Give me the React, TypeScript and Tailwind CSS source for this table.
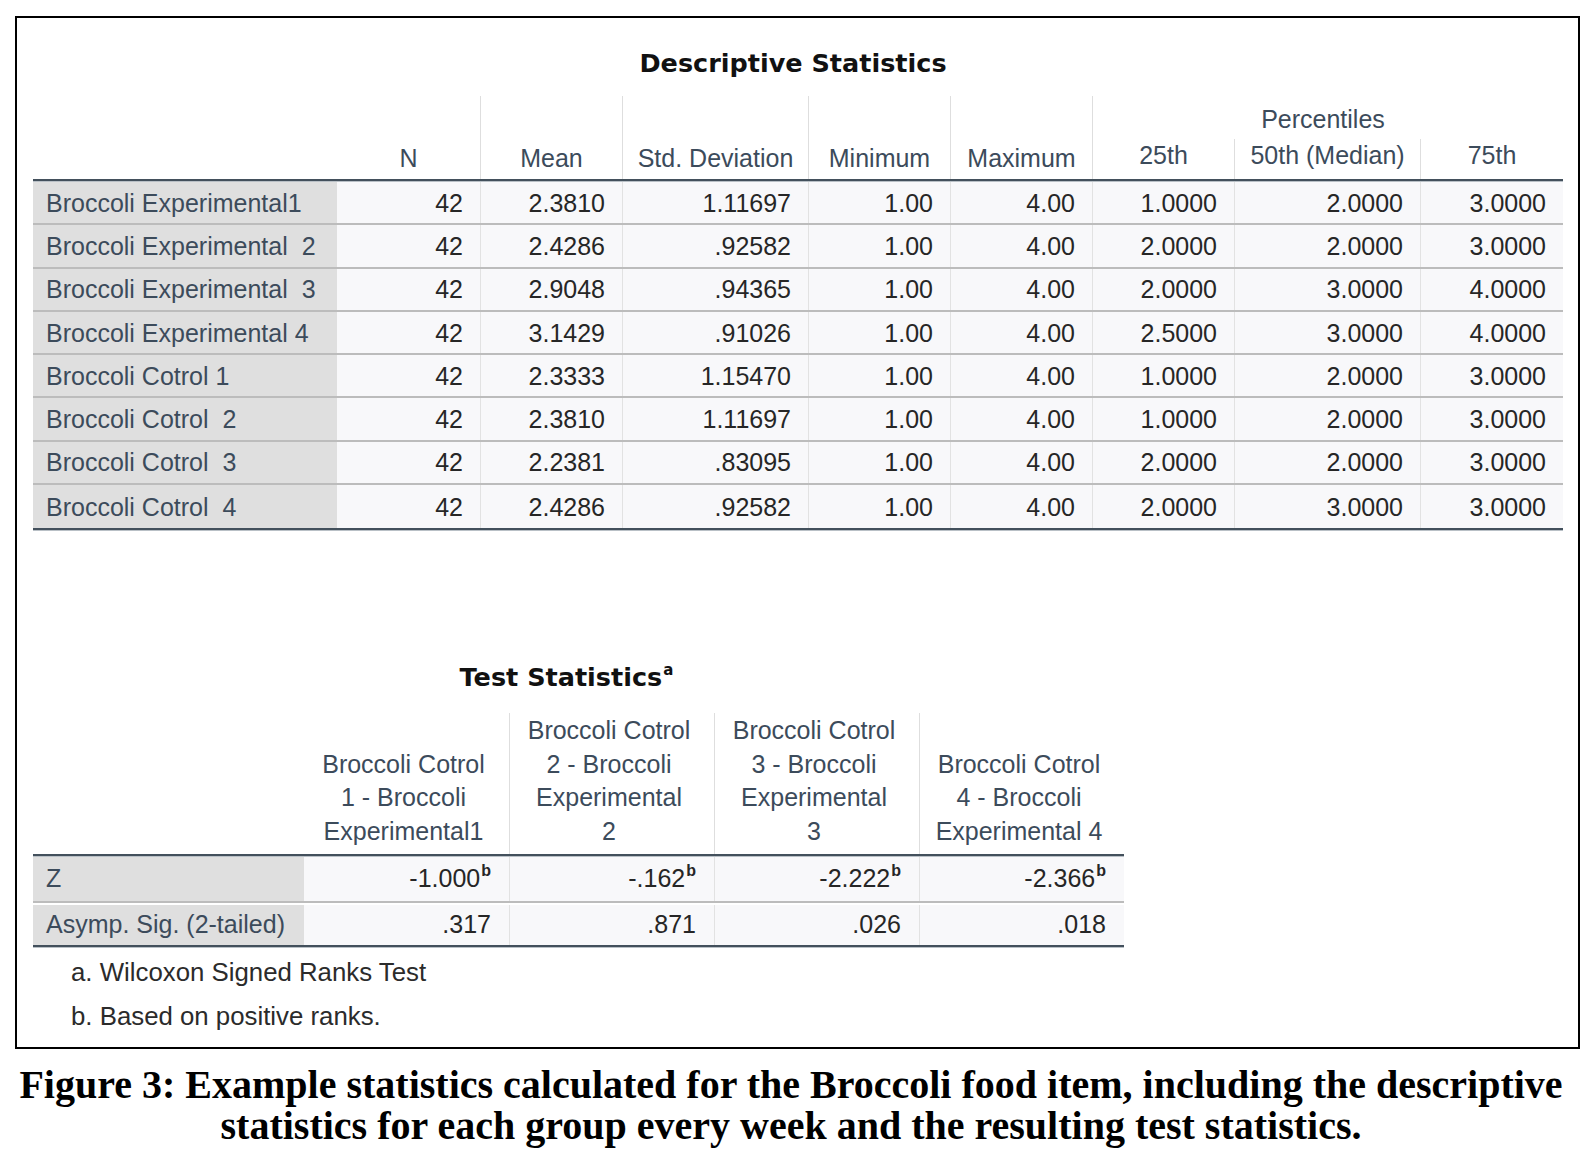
import React from "react";

const rows: string[][] = [
  ["Broccoli Experimental1", "42", "2.3810", "1.11697", "1.00", "4.00", "1.0000", "2.0000", "3.0000"],
  ["Broccoli Experimental  2", "42", "2.4286", ".92582", "1.00", "4.00", "2.0000", "2.0000", "3.0000"],
  ["Broccoli Experimental  3", "42", "2.9048", ".94365", "1.00", "4.00", "2.0000", "3.0000", "4.0000"],
  ["Broccoli Experimental 4", "42", "3.1429", ".91026", "1.00", "4.00", "2.5000", "3.0000", "4.0000"],
  ["Broccoli Cotrol 1", "42", "2.3333", "1.15470", "1.00", "4.00", "1.0000", "2.0000", "3.0000"],
  ["Broccoli Cotrol  2", "42", "2.3810", "1.11697", "1.00", "4.00", "1.0000", "2.0000", "3.0000"],
  ["Broccoli Cotrol  3", "42", "2.2381", ".83095", "1.00", "4.00", "2.0000", "2.0000", "3.0000"],
  ["Broccoli Cotrol  4", "42", "2.4286", ".92582", "1.00", "4.00", "2.0000", "3.0000", "3.0000"],
];

const DCOLS = "grid grid-cols-[304px_143px_142px_186px_142px_142px_142px_186px_143px]";
const TCOLS = "grid grid-cols-[271px_205px_205px_205px_205px]";

function ThickLine({ w }: { w: string }) {
  return (
    <div className={w}>
      <div className="h-[2px] bg-[#43505c]" />
      <div className="h-px bg-[#b9c0c6]" />
    </div>
  );
}

function Sup({ c }: { c: string }) {
  return (
    <span className="relative -top-[11px] ml-[1px] text-[16px] font-bold leading-none">{c}</span>
  );
}

export default function App() {
  return (
    <div className="min-h-[1150px] w-[1588px] bg-white pt-[16px] font-['Liberation_Sans',Arial,sans-serif] text-[25px]">
      <div className="ml-[15px] h-[1033px] w-[1565px] border-2 border-black">
        {/* Descriptive Statistics */}
        <div className="ml-[16px] mt-[30px] w-[1530px] pr-[10px] text-center font-['DejaVu_Sans',sans-serif] text-[25.5px] font-bold leading-[30px] text-[#111]">
          Descriptive Statistics
        </div>
        <div className="ml-[16px] mt-[18px] w-[1530px]">
          {/* header */}
          <div className={`${DCOLS} grid-rows-[43px_40px] text-[#3c4b5b] leading-[30px]`}>
            <div className="col-start-1 row-span-2" />
            <div className="col-start-2 row-span-2 row-start-1 flex items-end justify-center pb-[6px]">N</div>
            <div className="col-start-3 row-span-2 row-start-1 flex items-end justify-center border-l border-[#dedede] pb-[6px]">Mean</div>
            <div className="col-start-4 row-span-2 row-start-1 flex items-end justify-center border-l border-[#dedede] pb-[6px]">Std. Deviation</div>
            <div className="col-start-5 row-span-2 row-start-1 flex items-end justify-center border-l border-[#dedede] pb-[6px]">Minimum</div>
            <div className="col-start-6 row-span-2 row-start-1 flex items-end justify-center border-l border-[#dedede] pb-[6px]">Maximum</div>
            <div className="col-span-3 col-start-7 row-start-1 flex items-center justify-center border-l border-[#dedede] pt-[2px] pr-[10px]">Percentiles</div>
            <div className="col-start-7 row-start-2 flex items-center justify-center border-l border-[#dedede] pb-[8px]">25th</div>
            <div className="col-start-8 row-start-2 flex items-center justify-center border-l border-[#dedede] pb-[8px]">50th (Median)</div>
            <div className="col-start-9 row-start-2 flex items-center justify-center border-l border-[#dedede] pb-[8px]">75th</div>
          </div>
          <ThickLine w="w-full" />
          {rows.map((r, i) => (
            <div
              key={i}
              className={`${DCOLS} h-[43.25px] pt-[2px] ${i < rows.length - 1 ? "border-b-2 border-[#bcbcbc]" : ""}`}
            >
              <div className="-mt-[2px] flex items-center whitespace-pre bg-[#dfdfdf] pl-[13px] pt-[2px] text-[#3c4b5b]">{r[0]}</div>
              {r.slice(1).map((v, j) => (
                <div
                  key={j}
                  className={`-mt-[2px] flex items-center justify-end bg-[#f8f8fa] pr-[17px] pt-[2px] text-[#262626] ${j > 0 ? "border-l border-[#e2e2e2]" : ""}`}
                >
                  {v}
                </div>
              ))}
            </div>
          ))}
          <ThickLine w="w-full" />
        </div>

        {/* Test Statistics */}
        <div className="ml-[16px] mt-[131px] w-[1091px] pr-[24px] text-center font-['DejaVu_Sans',sans-serif] text-[25.5px] font-bold leading-[30px] text-[#111]">
          Test Statistics
          <span className="relative -top-[11px] ml-[1px] text-[15px] leading-none">a</span>
        </div>
        <div className="ml-[16px] mt-[21px] w-[1091px]">
          <div className={`${TCOLS} h-[141px] text-center leading-[33.5px] text-[#3c4b5b]`}>
            <div />
            <div className="flex items-end justify-center whitespace-nowrap pb-[6px] pr-[6px]">
              <div>
                Broccoli Cotrol
                <br />1 - Broccoli
                <br />
                Experimental1
              </div>
            </div>
            <div className="flex items-end justify-center whitespace-nowrap border-l border-[#dedede] pb-[6px] pr-[6px]">
              <div>
                Broccoli Cotrol
                <br />2 - Broccoli
                <br />
                Experimental
                <br />2
              </div>
            </div>
            <div className="flex items-end justify-center whitespace-nowrap border-l border-[#dedede] pb-[6px] pr-[6px]">
              <div>
                Broccoli Cotrol
                <br />3 - Broccoli
                <br />
                Experimental
                <br />3
              </div>
            </div>
            <div className="flex items-end justify-center whitespace-nowrap border-l border-[#dedede] pb-[6px] pr-[6px]">
              <div>
                Broccoli Cotrol
                <br />4 - Broccoli
                <br />
                Experimental 4
              </div>
            </div>
          </div>
          <ThickLine w="w-full" />
          <div className={`${TCOLS} h-[46px] border-b-2 border-[#bcbcbc]`}>
            <div className="flex items-center bg-[#dfdfdf] pl-[13px] text-[#3c4b5b]">Z</div>
            <div className="flex items-center justify-end bg-[#f8f8fa] pr-[18px] text-[#262626]">
              <span>-1.000<Sup c="b" /></span>
            </div>
            <div className="flex items-center justify-end border-l border-[#e2e2e2] bg-[#f8f8fa] pr-[18px] text-[#262626]">
              <span>-.162<Sup c="b" /></span>
            </div>
            <div className="flex items-center justify-end border-l border-[#e2e2e2] bg-[#f8f8fa] pr-[18px] text-[#262626]">
              <span>-2.222<Sup c="b" /></span>
            </div>
            <div className="flex items-center justify-end border-l border-[#e2e2e2] bg-[#f8f8fa] pr-[18px] text-[#262626]">
              <span>-2.366<Sup c="b" /></span>
            </div>
          </div>
          <div className={`${TCOLS} h-[42px] pt-[2px]`}>
            <div className="flex items-center whitespace-nowrap bg-[#dfdfdf] pl-[13px] text-[#3c4b5b]">Asymp. Sig. (2-tailed)</div>
            <div className="flex items-center justify-end bg-[#f8f8fa] pr-[18px] text-[#262626]">.317</div>
            <div className="flex items-center justify-end border-l border-[#e2e2e2] bg-[#f8f8fa] pr-[18px] text-[#262626]">.871</div>
            <div className="flex items-center justify-end border-l border-[#e2e2e2] bg-[#f8f8fa] pr-[18px] text-[#262626]">.026</div>
            <div className="flex items-center justify-end border-l border-[#e2e2e2] bg-[#f8f8fa] pr-[18px] text-[#262626]">.018</div>
          </div>
          <ThickLine w="w-full" />
        </div>
        <div className="ml-[54px] mt-[2px] text-[25.8px] leading-[44px] text-[#2b2b2b]">
          <div>a. Wilcoxon Signed Ranks Test</div>
          <div>b. Based on positive ranks.</div>
        </div>
      </div>
      <div className="mt-[15px] w-[1582px] text-center font-['Liberation_Serif','Times_New_Roman',serif] text-[40px] font-bold leading-[41px] text-black">
        Figure 3: Example statistics calculated for the Broccoli food item, including the descriptive
        <br />
        statistics for each group every week and the resulting test statistics.
      </div>
    </div>
  );
}
